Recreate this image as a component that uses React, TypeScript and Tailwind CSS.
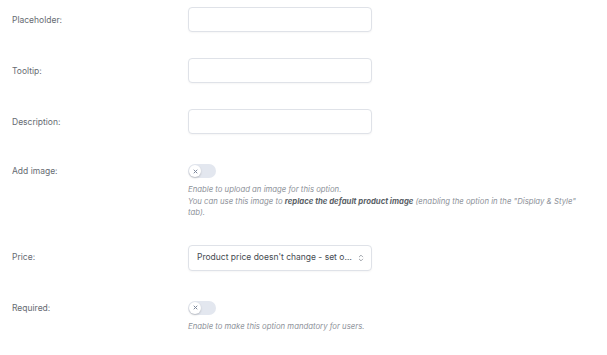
import { ReactNode } from "react";

function Toggle() {
  return (
    <div className="mt-[4px] flex h-[14px] w-[28px] items-center rounded-full bg-[#e3e7ef] px-[1px]">
      <div className="flex h-[12px] w-[12px] items-center justify-center rounded-full bg-white shadow-[0_1px_2px_rgba(0,0,0,0.2)]">
        <svg viewBox="0 0 10 10" className="h-[5px] w-[5px]" fill="none" aria-hidden="true">
          <path d="M2 2l6 6M8 2L2 8" stroke="#7d879a" strokeWidth="2" strokeLinecap="round" />
        </svg>
      </div>
    </div>
  );
}

function TextInput() {
  return (
    <input
      type="text"
      className="h-[25px] w-[184px] rounded-[4px] border border-[#dfe2e8] bg-white shadow-[0_1px_2px_rgba(0,0,0,0.04)] outline-none"
    />
  );
}

function Row({ label, top, children }: { label: string; top?: boolean; children: ReactNode }) {
  return (
    <div className="flex">
      <div
        className={[
          "w-[176px] shrink-0 text-[8.5px] leading-[14px] text-[#666b72]",
          top ? "pt-[4px]" : "flex h-[25px] items-center",
        ].join(" ")}
      >
        {label}
      </div>
      <div className="min-w-0 flex-1">{children}</div>
    </div>
  );
}

function Help({ children }: { children: ReactNode }) {
  return (
    <p className="mt-[6px] max-w-[404px] text-[7.75px] italic leading-[11.5px] text-[#8d9199]">{children}</p>
  );
}

export default function App() {
  return (
    <div
      className="flex min-h-[355px] w-[607px] flex-col gap-[26px] bg-white pl-[12px] pt-[7px]"
      style={{ fontFamily: "Inter, 'Liberation Sans', sans-serif" }}
    >
      <Row label="Placeholder:">
        <TextInput />
      </Row>
      <Row label="Tooltip:">
        <TextInput />
      </Row>
      <Row label="Description:">
        <TextInput />
      </Row>
      <Row label="Add image:" top>
        <Toggle />
        <Help>
          Enable to upload an image for this option.
          <br />
          You can use this image to{" "}
          <span className="font-bold text-[#5a5f66]">replace the default product image</span> (enabling the
          option in the "Display &amp; Style" tab).
        </Help>
      </Row>
      <Row label="Price:">
        <div className="flex h-[26px] w-[184px] items-center rounded-[4px] border border-[#dfe2e8] bg-white pl-[8px] pr-[7px] shadow-[0_1px_2px_rgba(0,0,0,0.04)]">
          <span className="min-w-0 flex-1 truncate text-[8.5px] text-[#464b52]">
            Product price doesn't change - set option as free
          </span>
          <svg viewBox="0 0 10 14" className="ml-[3px] h-[8px] w-[6px] shrink-0" fill="none" aria-hidden="true">
            <path d="M2 5l3-3 3 3M2 9l3 3 3-3" stroke="#8a8f98" strokeWidth="1.4" strokeLinecap="round" strokeLinejoin="round" />
          </svg>
        </div>
      </Row>
      <Row label="Required:" top>
        <Toggle />
        <Help>Enable to make this option mandatory for users.</Help>
      </Row>
    </div>
  );
}
